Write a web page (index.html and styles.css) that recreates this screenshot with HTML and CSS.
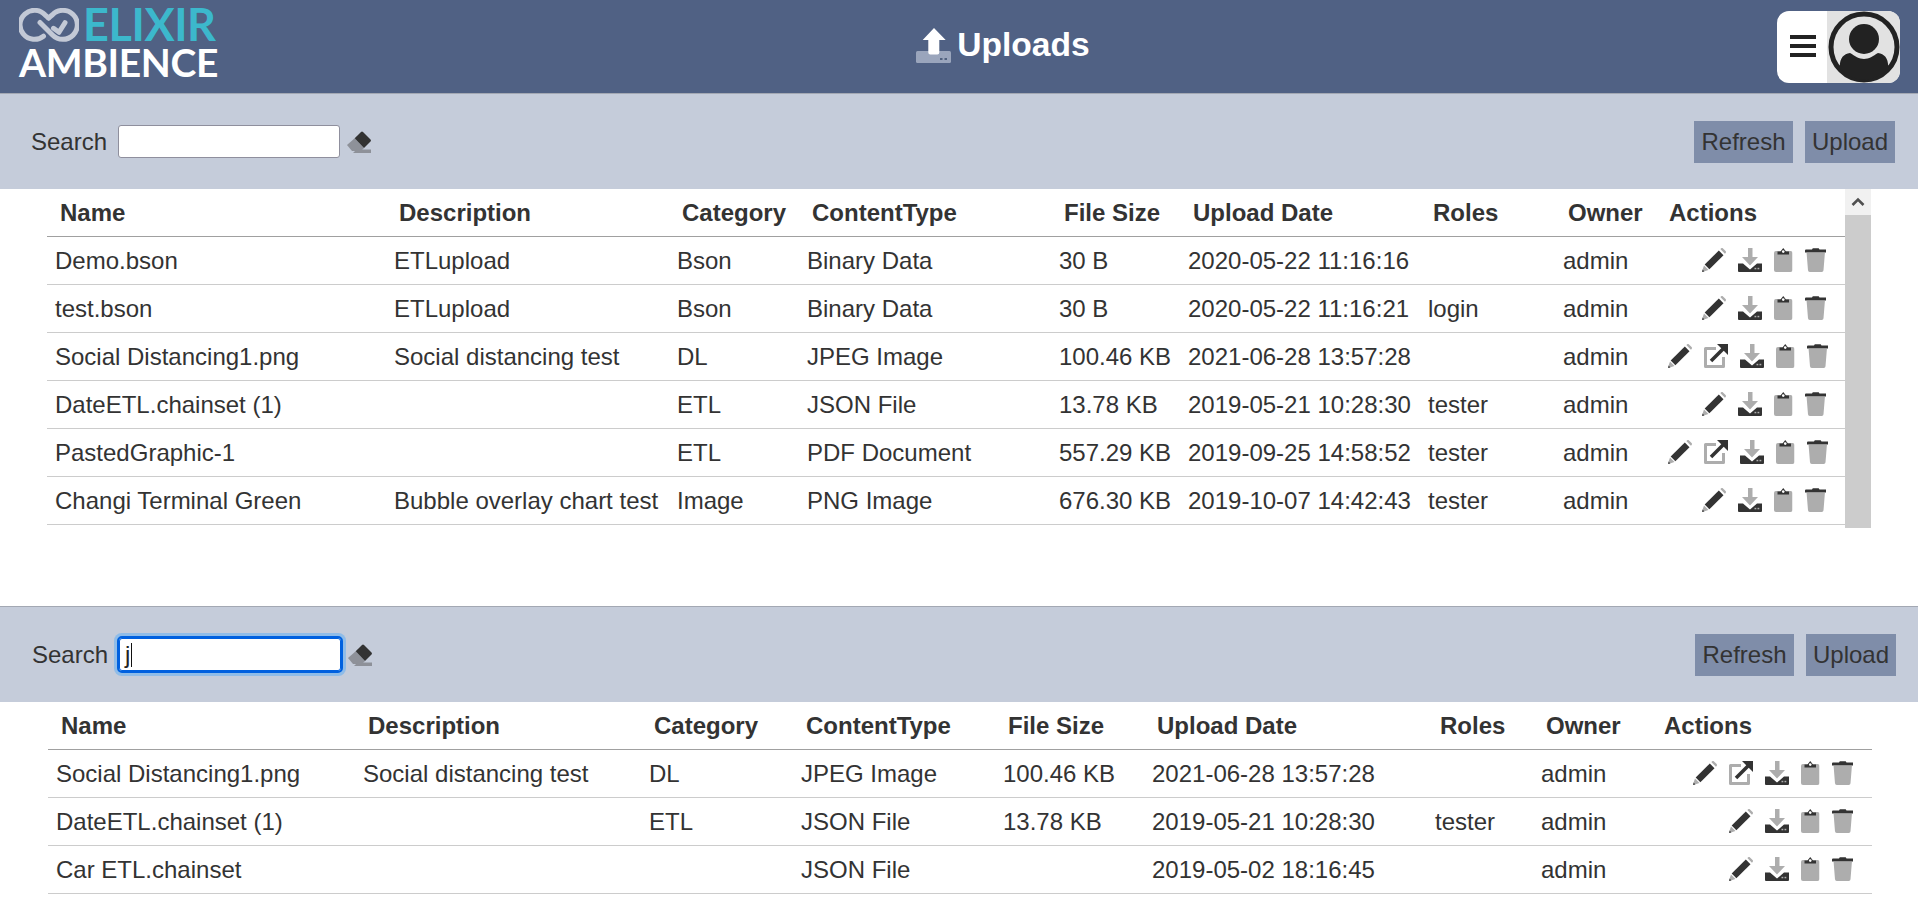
FILE: index.html
```html
<!DOCTYPE html>
<html lang="en">
<head>
<meta charset="utf-8">
<title>Uploads</title>
<link rel="stylesheet" href="styles.css">
</head>
<body>
<svg class="defs" width="0" height="0" aria-hidden="true">
  <defs>
    <symbol id="i-edit" viewBox="0 0 24 24">
      <path fill="#adadad" d="M18.300 1 19 .4c.6-.5 1.400-.5 2 0l2.600 2.600c.5.600.5 1.400 0 2l-.7.700z"/>
      <path fill="#333" d="M16.800 2.500 21.500 7.200 7.400 21.300 2.700 16.600z"/>
      <path fill="#adadad" d="M2 17.500 6.500 22 1.800 23.600.4 22.200z"/>
      <path fill="#333" d="M0 24 .6 21.600 2.400 23.400z"/>
    </symbol>
    <symbol id="i-open" viewBox="0 0 24 24">
      <path fill="none" stroke="#adadad" stroke-width="3" stroke-linejoin="round" d="M12 4.500H1.500v18h18V13"/>
      <path fill="none" stroke="#333" stroke-width="3.600" d="M7 17 19 5"/>
      <path fill="#333" d="M13 0H24v11z"/>
    </symbol>
    <symbol id="i-down" viewBox="0 0 24 24">
      <path fill="#adadad" d="M10 0h4.500v9H20l-8 8.500L4 9h6z"/>
      <path fill="#333" d="M0 15.500h5l7 6 7-6h5v7.500a1 1 0 0 1-1 1H1a1 1 0 0 1-1-1z"/>
      <rect x="16.500" y="19.800" width="1.800" height="1.500" fill="#adadad"/>
      <rect x="19.500" y="19.800" width="1.800" height="1.500" fill="#adadad"/>
    </symbol>
    <symbol id="i-clip" viewBox="0 0 18.500 24">
      <path fill="#adadad" d="M2 3h14.500a2 2 0 0 1 2 2v17a2 2 0 0 1-2 2H2a2 2 0 0 1-2-2V5a2 2 0 0 1 2-2z"/>
      <path fill="#333" d="M3.500 6.500V3.500H6.500L9.250 0 12 3.500H15V6.500z"/>
      <circle cx="9.250" cy="3.600" r="1.300" fill="#fff"/>
    </symbol>
    <symbol id="i-trash" viewBox="0 0 21.500 24">
      <path fill="#adadad" d="M1.600 5h18.300l-1.400 17.300a1.800 1.800 0 0 1-1.800 1.700H4.800A1.800 1.800 0 0 1 3 22.300z"/>
      <path fill="#333" d="M1 1.500H7L7.800.2h5.900L14.500 1.500H20.500a1 1 0 0 1 1 1V4.600H0V2.500a1 1 0 0 1 1-1z"/>
    </symbol>
    <symbol id="i-erase" viewBox="0 0 24 22">
      <path fill="#8e9199" d="M0 14 7.700 7.300 17 17 14 20H5z"/>
      <path fill="#333" d="M7.700 7.300 14 1a1.500 1.500 0 0 1 2 0l7.500 7.500a1.500 1.500 0 0 1 0 2L17 17z"/>
      <path fill="#8e9199" d="M10 18.500H24V22H6l2-2z"/>
    </symbol>
  </defs>
</svg>

<header class="top">
  <div class="logo">
    <div class="logo-row">
      <svg class="logo-mark" viewBox="0 0 60 34" aria-hidden="true">
        <g fill="none" stroke="#c3c9d6" stroke-width="5" stroke-linecap="round" stroke-linejoin="round">
          <path d="M24.500 28.200A14.500 14.500 0 1 1 26 6.800L29.500 10"/>
          <path d="M21 14.500 33.500 27A14.500 14.500 0 1 0 33.500 6.700L29.500 10"/>
          <path d="M34.500 20.300 40 24.300 46 14.700"/>
        </g>
      </svg>
      <span class="logo-elixir">ELIXIR</span>
    </div>
    <div class="logo-ambience">AMBIENCE</div>
  </div>
  <h1 class="title">
    <svg class="title-icon" viewBox="0 0 35 35" aria-hidden="true">
      <rect x="0" y="23" width="35" height="12" rx="1.500" fill="#9aa5bc"/>
      <path fill="#fff" d="M18 0 29.700 12H23.300V24.500a2 2 0 0 1-2 2H14.300a2 2 0 0 1-2-2V12H6.700z"/>
      <rect x="24" y="30" width="2.500" height="2" fill="#50617f"/>
      <rect x="28.500" y="30" width="2.500" height="2" fill="#50617f"/>
    </svg>
    <span>Uploads</span>
  </h1>
  <div class="user-box">
    <div class="burger"><span></span><span></span><span></span></div>
    <div class="avatar">
      <svg viewBox="0 0 72 72" aria-hidden="true">
        <circle cx="36" cy="36" r="33" fill="#e2e2e2" stroke="#222" stroke-width="5"/>
        <circle cx="36" cy="28" r="15" fill="#222"/>
        <path fill="#222" d="M12 58c-1-10 3-15 10-16 5 3 9 6 14 6s9-3 14-6c7 1 11 6 10 16a33 33 0 0 1-48 0z"/>
      </svg>
    </div>
  </div>
</header>

<section class="panel panel-a">
  <div class="toolbar">
    <label class="search">Search <input class="search-input" type="text"></label>
    <svg class="eraser"><use href="#i-erase"/></svg>
    <div class="buttons"><button class="btn btn-r">Refresh</button><button class="btn">Upload</button></div>
  </div>
  <div class="table-wrap">
    <table class="grid">
      <colgroup><col class="a1"><col class="a2"><col class="a3"><col class="a4"><col class="a5"><col class="a6"><col class="a7"><col class="a8"><col class="a9"></colgroup>
      <thead><tr><th>Name</th><th>Description</th><th>Category</th><th>ContentType</th><th>File Size</th><th>Upload Date</th><th>Roles</th><th>Owner</th><th>Actions</th></tr></thead>
      <tbody>
        <tr><td>Demo.bson</td><td>ETLupload</td><td>Bson</td><td>Binary Data</td><td>30 B</td><td>2020-05-22 11:16:16</td><td></td><td>admin</td><td class="acts"><svg class="ic"><use href="#i-edit"/></svg><svg class="ic"><use href="#i-down"/></svg><svg class="ic ic-s"><use href="#i-clip"/></svg><svg class="ic ic-t"><use href="#i-trash"/></svg></td></tr>
        <tr><td>test.bson</td><td>ETLupload</td><td>Bson</td><td>Binary Data</td><td>30 B</td><td>2020-05-22 11:16:21</td><td>login</td><td>admin</td><td class="acts"><svg class="ic"><use href="#i-edit"/></svg><svg class="ic"><use href="#i-down"/></svg><svg class="ic ic-s"><use href="#i-clip"/></svg><svg class="ic ic-t"><use href="#i-trash"/></svg></td></tr>
        <tr><td>Social Distancing1.png</td><td>Social distancing test</td><td>DL</td><td>JPEG Image</td><td>100.46 KB</td><td>2021-06-28 13:57:28</td><td></td><td>admin</td><td class="acts"><svg class="ic"><use href="#i-edit"/></svg><svg class="ic"><use href="#i-open"/></svg><svg class="ic"><use href="#i-down"/></svg><svg class="ic ic-s"><use href="#i-clip"/></svg><svg class="ic ic-t"><use href="#i-trash"/></svg></td></tr>
        <tr><td>DateETL.chainset (1)</td><td></td><td>ETL</td><td>JSON File</td><td>13.78 KB</td><td>2019-05-21 10:28:30</td><td>tester</td><td>admin</td><td class="acts"><svg class="ic"><use href="#i-edit"/></svg><svg class="ic"><use href="#i-down"/></svg><svg class="ic ic-s"><use href="#i-clip"/></svg><svg class="ic ic-t"><use href="#i-trash"/></svg></td></tr>
        <tr><td>PastedGraphic-1</td><td></td><td>ETL</td><td>PDF Document</td><td>557.29 KB</td><td>2019-09-25 14:58:52</td><td>tester</td><td>admin</td><td class="acts"><svg class="ic"><use href="#i-edit"/></svg><svg class="ic"><use href="#i-open"/></svg><svg class="ic"><use href="#i-down"/></svg><svg class="ic ic-s"><use href="#i-clip"/></svg><svg class="ic ic-t"><use href="#i-trash"/></svg></td></tr>
        <tr><td>Changi Terminal Green</td><td>Bubble overlay chart test</td><td>Image</td><td>PNG Image</td><td>676.30 KB</td><td>2019-10-07 14:42:43</td><td>tester</td><td>admin</td><td class="acts"><svg class="ic"><use href="#i-edit"/></svg><svg class="ic"><use href="#i-down"/></svg><svg class="ic ic-s"><use href="#i-clip"/></svg><svg class="ic ic-t"><use href="#i-trash"/></svg></td></tr>
      </tbody>
    </table>
    <div class="scrollbar"><div class="scroll-up"><svg viewBox="0 0 14 10" aria-hidden="true"><path fill="none" stroke="#505050" stroke-width="2.600" d="M1.500 8 7 2.500 12.500 8"/></svg></div></div>
  </div>
</section>

<section class="panel panel-b">
  <div class="toolbar">
    <label class="search">Search <span class="search-input focused"><span class="typed">j</span><span class="caret"></span></span></label>
    <svg class="eraser"><use href="#i-erase"/></svg>
    <div class="buttons"><button class="btn btn-r">Refresh</button><button class="btn">Upload</button></div>
  </div>
  <table class="grid">
    <colgroup><col class="b1"><col class="b2"><col class="b3"><col class="b4"><col class="b5"><col class="b6"><col class="b7"><col class="b8"><col class="b9"></colgroup>
    <thead><tr><th>Name</th><th>Description</th><th>Category</th><th>ContentType</th><th>File Size</th><th>Upload Date</th><th>Roles</th><th>Owner</th><th>Actions</th></tr></thead>
    <tbody>
      <tr><td>Social Distancing1.png</td><td>Social distancing test</td><td>DL</td><td>JPEG Image</td><td>100.46 KB</td><td>2021-06-28 13:57:28</td><td></td><td>admin</td><td class="acts"><svg class="ic"><use href="#i-edit"/></svg><svg class="ic"><use href="#i-open"/></svg><svg class="ic"><use href="#i-down"/></svg><svg class="ic ic-s"><use href="#i-clip"/></svg><svg class="ic ic-t"><use href="#i-trash"/></svg></td></tr>
      <tr><td>DateETL.chainset (1)</td><td></td><td>ETL</td><td>JSON File</td><td>13.78 KB</td><td>2019-05-21 10:28:30</td><td>tester</td><td>admin</td><td class="acts"><svg class="ic"><use href="#i-edit"/></svg><svg class="ic"><use href="#i-down"/></svg><svg class="ic ic-s"><use href="#i-clip"/></svg><svg class="ic ic-t"><use href="#i-trash"/></svg></td></tr>
      <tr><td>Car ETL.chainset</td><td></td><td></td><td>JSON File</td><td></td><td>2019-05-02 18:16:45</td><td></td><td>admin</td><td class="acts"><svg class="ic"><use href="#i-edit"/></svg><svg class="ic"><use href="#i-down"/></svg><svg class="ic ic-s"><use href="#i-clip"/></svg><svg class="ic ic-t"><use href="#i-trash"/></svg></td></tr>
    </tbody>
  </table>
</section>
</body>
</html>
```
FILE: styles.css
```css
* { box-sizing: border-box; }
html, body { margin: 0; height: 900px; overflow: hidden; background: #fff; }
body { font-family: "Liberation Sans", Arial, sans-serif; font-size: 24px; color: #333; }
.defs { position: absolute; }

.top { height: 94px; background: #506184; border-bottom: 1px solid #a3a8b3; display: grid; grid-template-columns: 1fr auto 1fr; align-items: center; padding: 0 18px 0 19px; }
.logo { height: 93px; padding-top: 7px; display: flex; flex-direction: column; gap: 6px; color: #fff; font-family: Lato, sans-serif; font-weight: 700; }
.logo-row { display: flex; align-items: center; gap: 4px; height: 34px; }
.logo-mark { width: 60px; height: 34px; margin-top: 2px; flex: none; }
.logo-elixir { font-size: 45px; color: #3cb8cc; line-height: 34px; letter-spacing: -.4px; }
.logo-ambience { font-size: 39px; line-height: 30px; letter-spacing: -.35px; }
.title { margin: 0 0 0 87px; padding-bottom: 4px; display: flex; align-items: center; gap: 6px; color: #fff; font-size: 33.6px; font-weight: 700; line-height: 40px; }
.title-icon { width: 35px; height: 35px; margin-top: 1px; }
.user-box { justify-self: end; width: 123px; height: 72px; background: #fff; border-radius: 12px; overflow: hidden; display: flex; }
.burger { width: 50px; flex: none; display: flex; flex-direction: column; justify-content: center; align-items: flex-end; gap: 5px; padding: 0 11px 2px 0; }
.burger span { display: block; width: 26px; height: 4px; background: #222; }
.avatar { flex: 1; background: #e2e2e2; display: flex; align-items: center; justify-content: center; }
.avatar svg { width: 72px; height: 72px; }

.toolbar { height: 95px; background: #c5ccda; display: flex; align-items: center; padding: 0 23px 0 31px; }
.search { display: flex; align-items: center; gap: 11px; line-height: 28px; }
.search-input { display: block; width: 222px; height: 33px; margin: 0; padding: 0 6px; border: 1px solid #8f8f9d; border-radius: 3px; background: #fff; font: inherit; color: #222; }
.eraser { width: 24px; height: 22px; margin-left: 7px; margin-top: 1px; }
.buttons { margin-left: auto; display: flex; gap: 12px; }
.btn { width: 90px; height: 42px; padding: 0; border: 0; background: #7f8da9; color: #333; font: inherit; border-radius: 0; }
.btn-r { width: 99px; }

.table-wrap { display: flex; align-items: flex-start; padding-left: 47px; }
.panel-a { height: 512px; }
.panel-b { border-top: 1px solid #a3a8b3; }
.panel-b .toolbar { padding-left: 32px; padding-right: 22px; }
.focused { display: flex; align-items: center; border: 1px solid #0060df; outline: 2px solid #0060df; border-radius: 3px; box-shadow: 0 0 0 5px #8fbce8; padding: 0 0 0 5px; }
.typed { color: #222; line-height: 28px; }
.caret { width: 1px; height: 24px; background: #111; margin-left: 1px; }
.grid { table-layout: fixed; border-collapse: collapse; width: 1798px; flex: none; }
.panel-b .grid { width: 1824px; margin-left: 48px; }
.grid th { height: 47px; padding: 1px 0 0 13px; text-align: left; font-weight: 700; border-bottom: 1px solid #a0a0a0; white-space: nowrap; }
.grid td { height: 48px; padding: 2px 0 0 8px; border-bottom: 1px solid #ccc; white-space: nowrap; }
.grid td.acts { padding: 0 19px 0 0; text-align: right; }
.ic { width: 24px; height: 24px; margin: 0 0 2px 12px; vertical-align: middle; }
.ic-s { width: 18.5px; }
.ic-t { width: 21.5px; }

.a1 { width: 339px; } .a2 { width: 283px; } .a3 { width: 130px; } .a4 { width: 252px; } .a5 { width: 129px; } .a6 { width: 240px; } .a7 { width: 135px; } .a8 { width: 101px; } .a9 { width: 189px; }
.b1 { width: 307px; } .b2 { width: 286px; } .b3 { width: 152px; } .b4 { width: 202px; } .b5 { width: 149px; } .b6 { width: 283px; } .b7 { width: 106px; } .b8 { width: 118px; } .b9 { width: 221px; }

.scrollbar { width: 26px; height: 339px; background: #ccc; flex: none; }
.scroll-up { height: 26px; background: #f1f1f1; display: flex; align-items: center; justify-content: center; }
.scroll-up svg { width: 14px; height: 10px; }
```
